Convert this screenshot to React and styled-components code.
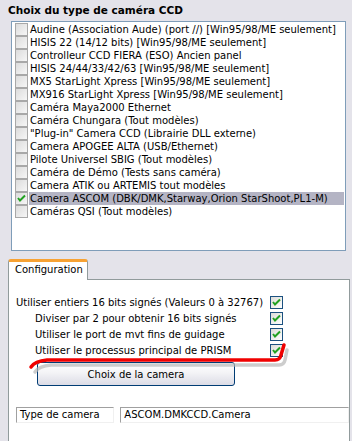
import React from 'react';
import styled, { createGlobalStyle } from 'styled-components';

const cameras = [
  'Audine (Association Aude) (port //) [Win95/98/ME seulement]',
  'HISIS 22 (14/12 bits) [Win95/98/ME seulement]',
  'Controlleur CCD FIERA (ESO) Ancien panel',
  'HISIS 24/44/33/42/63 [Win95/98/ME seulement]',
  'MX5 StarLight Xpress [Win95/98/ME seulement]',
  'MX916 StarLight Xpress [Win95/98/ME seulement]',
  'Caméra Maya2000 Ethernet',
  'Caméra Chungara (Tout modèles)',
  '"Plug-in" Camera CCD (Librairie DLL externe)',
  'Camera APOGEE ALTA (USB/Ethernet)',
  'Pilote Universel SBIG (Tout modèles)',
  'Caméra de Démo (Tests sans caméra)',
  'Camera ATIK ou ARTEMIS tout modèles',
  'Camera ASCOM (DBK/DMK,Starway,Orion StarShoot,PL1-M)',
  'Caméras QSI (Tout modèles)',
];

const selected = 13;

const options = [
  { label: 'Utiliser entiers 16 bits signés (Valeurs 0 à 32767)', indent: false },
  { label: 'Diviser par 2 pour obtenir 16 bits signés', indent: true },
  { label: 'Utiliser le port de mvt fins de guidage', indent: true },
  { label: 'Utiliser le processus principal de PRISM', indent: true },
];

const GlobalStyle = createGlobalStyle`
  html, body {
    margin: 0;
    padding: 0;
    background: #e4e3ea;
    overflow: hidden;
  }
  body {
    font-family: "DejaVu Sans", Verdana, sans-serif;
    font-size: 10px;
    color: #000;
  }
`;

const Window = styled.div`
  width: 352px;
  height: 441px;
  display: flex;
  flex-direction: column;
  overflow: hidden;
`;

const Title = styled.div`
  font-weight: bold;
  font-size: 10.5px;
  height: 14px;
  line-height: 14px;
  margin: 3px 0 4px 8px;
`;

const ListBox = styled.div`
  margin-left: 11px;
  width: 333px;
  height: 227px;
  border: 1px solid #7f9db9;
  background: #fff;
  padding-top: 1px;
  box-sizing: content-box;
`;

const Row = styled.div`
  display: flex;
  align-items: center;
  height: 13px;
  padding-left: 3px;
`;

const RowText = styled.span`
  margin-left: 1px;
  padding: 0 1px;
  line-height: 13px;
  white-space: nowrap;
  background: ${p => (p.$selected ? '#b4b4c4' : 'transparent')};
  flex: ${p => (p.$selected ? 1 : '0 0 auto')};
  margin-right: ${p => (p.$selected ? '1px' : 0)};
`;

const Box = styled.span`
  width: 11px;
  height: 11px;
  flex: 0 0 auto;
  display: inline-flex;
  align-items: center;
  justify-content: center;
  border: 1px solid ${p => (p.$blue ? '#1c5180' : '#a8a8a8')};
  background: ${p =>
    p.$blue
      ? 'linear-gradient(135deg, #dcdcd7 0%, #ffffff 100%)'
      : 'linear-gradient(135deg, #dcdcdc 0%, #f6f6f6 100%)'};
`;

const Tick = () => (
  <svg width="9" height="9" viewBox="0 0 9 9">
    <polyline points="1,4 3,6.5 8,1.5" fill="none" stroke="#21a121" strokeWidth="2" />
  </svg>
);

const Check = ({ checked, blue }) => <Box $blue={blue}>{checked && <Tick />}</Box>;

const TabStrip = styled.div`
  display: flex;
  align-items: flex-end;
  margin-top: 7px;
  margin-left: 8px;
  width: 342px;
  height: 21px;
  border-bottom: 1px solid #919b9c;
`;

const Tab = styled.div`
  width: 72px;
  height: 18px;
  margin-bottom: -1px;
  border: 1px solid #919b9c;
  border-bottom: none;
  border-top: 3px solid #f7a233;
  border-radius: 3px 3px 0 0;
  background: #fff;
  padding-left: 6px;
  line-height: 16px;
  white-space: nowrap;
`;

const Panel = styled.div`
  position: relative;
  margin-left: 8px;
  width: 340px;
  flex: 1;
  border-left: 1px solid #919b9c;
  border-right: 1px solid #919b9c;
  background: #fff;
  padding-top: 16px;
`;

const Options = styled.div`
  display: grid;
  grid-template-columns: 254px 13px;
  row-gap: 3px;
  padding-left: 7px;
`;

const OptLabel = styled.span`
  line-height: 13px;
  white-space: nowrap;
  padding-left: ${p => (p.$indent ? '19px' : 0)};
`;

const Button = styled.button`
  display: block;
  margin: 5px 0 0 28px;
  width: 198px;
  height: 24px;
  border: 1px solid #003c74;
  border-radius: 3px;
  background: linear-gradient(180deg, #ffffff 0%, #f3f3f6 45%, #dcdce6 100%);
  font-family: "DejaVu Sans", Verdana, sans-serif;
  font-size: 10px;
  color: #000;
  padding: 0;
`;

const Fields = styled.div`
  display: flex;
  gap: 6px;
  margin: 21px 0 0 7px;
`;

const Field = styled.div`
  width: ${p => p.$w}px;
  height: 14px;
  border-top: 1px solid #a0a0a0;
  border-left: 1px solid #a0a0a0;
  border-bottom: 1px solid #f0f0f0;
  border-right: 1px solid #f0f0f0;
  padding-left: 3px;
  line-height: 14px;
  white-space: nowrap;
  background: #fff;
`;

const Mark = styled.svg`
  position: absolute;
  left: 0;
  top: 0;
  pointer-events: none;
`;

export default function App() {
  return (
    <>
      <GlobalStyle />
      <Window>
        <Title>Choix du type de caméra CCD</Title>
        <ListBox>
          {cameras.map((c, i) => (
            <Row key={c}>
              <Check checked={i === selected} />
              <RowText $selected={i === selected}>{c}</RowText>
            </Row>
          ))}
        </ListBox>
        <TabStrip>
          <Tab>Configuration</Tab>
        </TabStrip>
        <Panel>
          <Options>
            {options.map(o => (
              <React.Fragment key={o.label}>
                <OptLabel $indent={o.indent}>{o.label}</OptLabel>
                <Check checked blue />
              </React.Fragment>
            ))}
          </Options>
          <Button>Choix de la camera</Button>
          <Fields>
            <Field $w={96}>Type de camera</Field>
            <Field $w={230}>ASCOM.DMKCCD.Camera</Field>
          </Fields>
          <Mark width="340" height="100">
            <path
              d="M24 90 Q28 84 40 83 L268 83 Q273 83 274 78 L276 68"
              fill="none"
              stroke="#b8b8b8"
              strokeWidth="3.5"
              strokeLinecap="round"
              transform="translate(2 2)"
              opacity="0.7"
            />
            <path
              d="M22 87 Q26 81 38 80 L266 80 Q271 80 272 75 L275 65"
              fill="none"
              stroke="#f00000"
              strokeWidth="3.5"
              strokeLinecap="round"
            />
          </Mark>
        </Panel>
      </Window>
    </>
  );
}
